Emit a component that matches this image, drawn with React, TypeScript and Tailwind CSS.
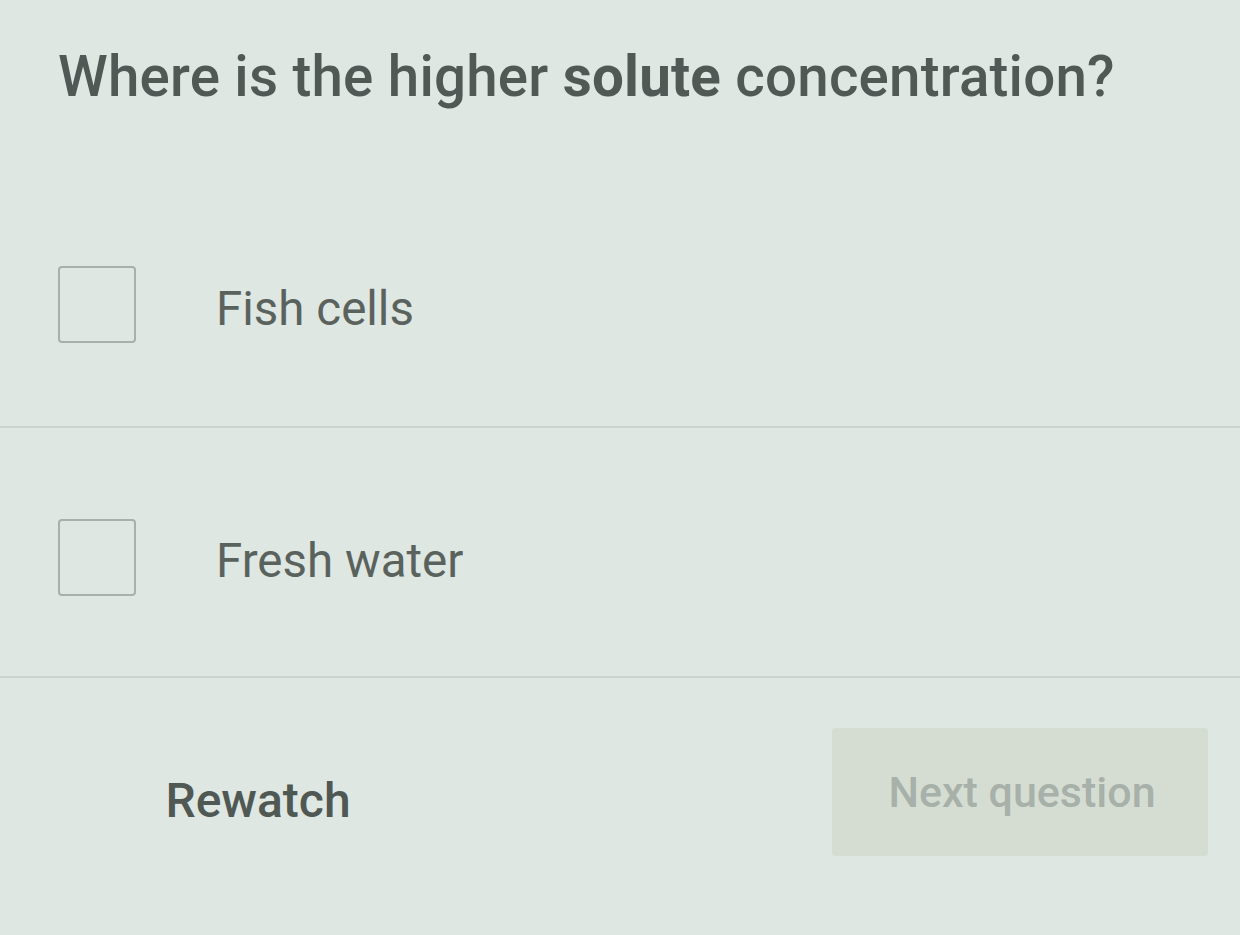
export default function App() {
  const options = ['Fish cells', 'Fresh water']

  return (
    <div
      className="w-[1240px] h-[935px] overflow-hidden bg-[#dfe7e2] text-[#505955]"
      style={{ fontFamily: 'Roboto, "Liberation Sans", sans-serif' }}
    >
      <h1 className="pl-[58px] pt-[45px] text-[56.5px] leading-[64px] font-medium tracking-[0.2px]">
        Where is the higher <span className="font-bold">solute</span> concentration?
      </h1>

      <div className="mt-[74px]">
        {options.map((label, i) => (
          <div key={label}>
            <div className={`flex items-center pl-[58px] ${i === 0 ? 'h-[243px]' : 'h-[248px] pt-[10px]'}`}>
              <div className="w-[78px] h-[77px] rounded-[4px] border-2 border-[#a9b0ac]" />
              <span className={`ml-[80px] text-[47.5px] leading-none text-[#5a625e] ${i === 0 ? 'pt-[10px]' : 'pt-[10px]'}`}>{label}</span>
            </div>
            <div className="h-[2px] bg-[#cbd3cd]" />
          </div>
        ))}
      </div>

      <div className="flex items-center h-[256px] pb-[28px]">
        <div className="w-[516px] flex justify-center">
          <button className="text-[48px] font-medium text-[#4f5853] pt-[18px]">Rewatch</button>
        </div>
        <div className="flex-1 flex justify-end pr-[32px]">
          <button className="w-[376px] h-[128px] rounded-[4px] bg-[#d5ddd3] text-[43px] font-medium text-[#a8b0aa] pl-[4px]">
            Next question
          </button>
        </div>
      </div>
    </div>
  )
}
